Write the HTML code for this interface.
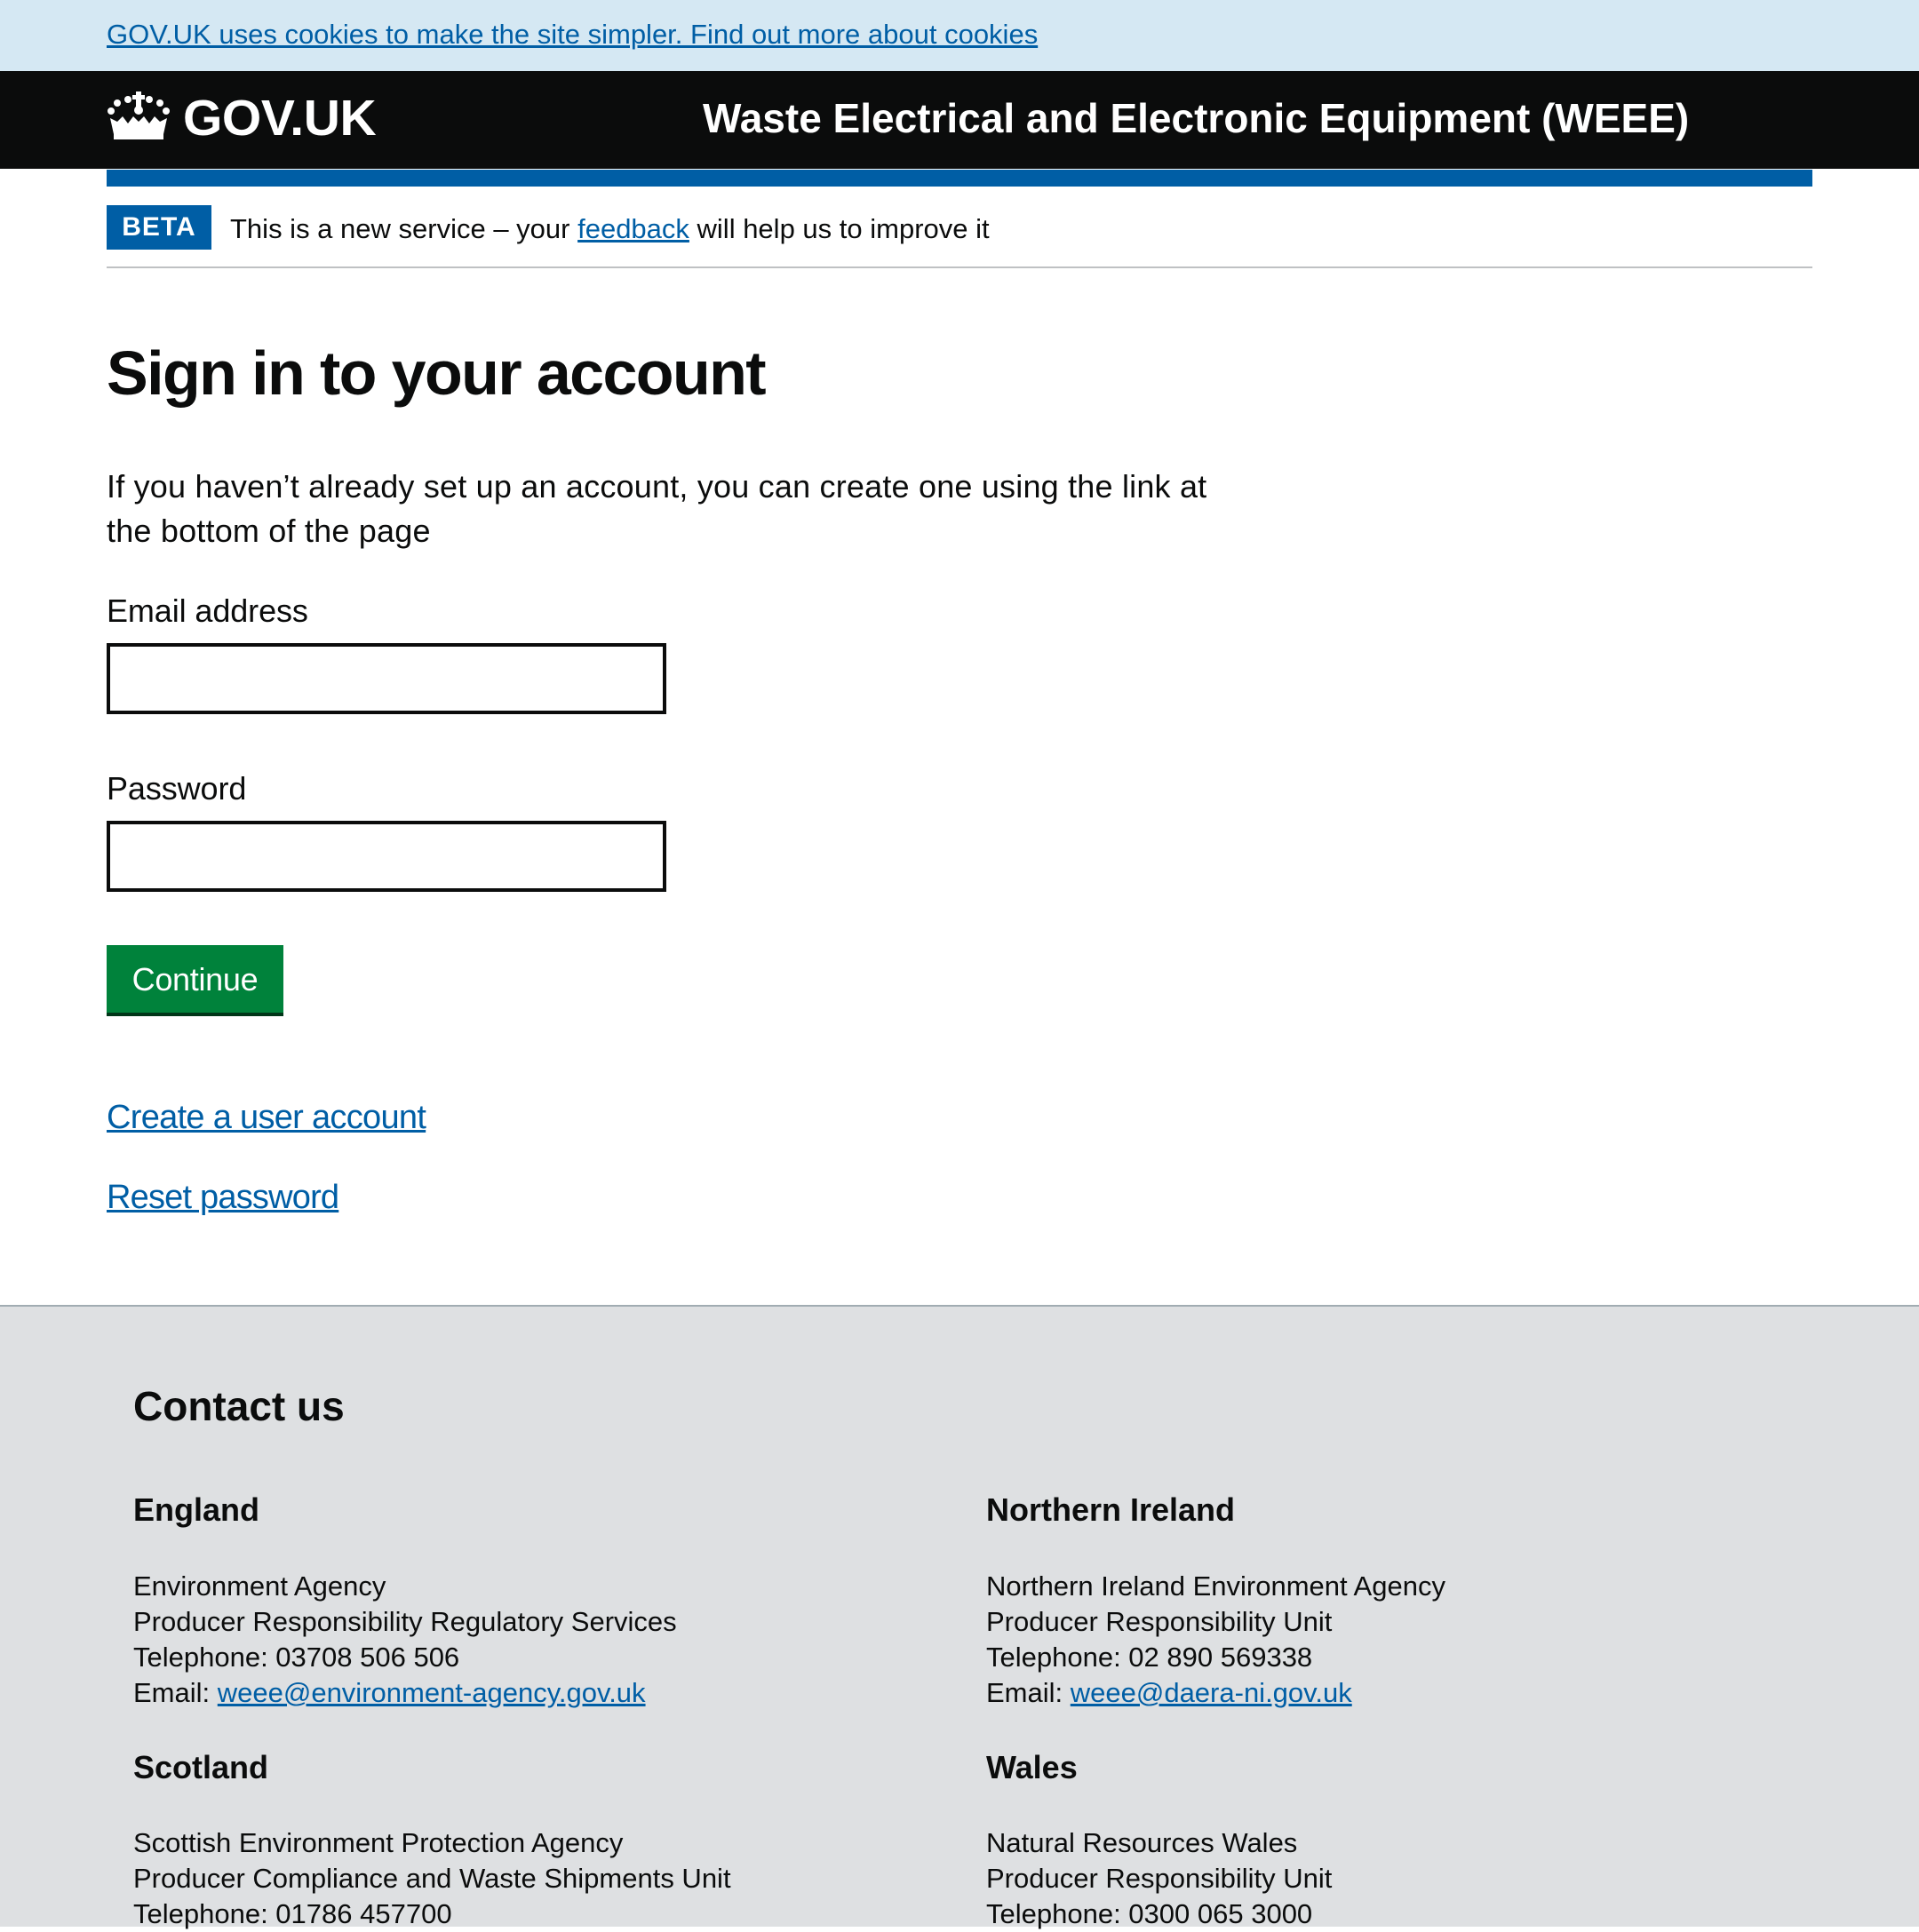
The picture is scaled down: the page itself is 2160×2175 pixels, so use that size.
<!DOCTYPE html>
<html><head><meta charset="utf-8"><style>
*{margin:0;padding:0;box-sizing:border-box}
html,body{width:2160px;height:2160px;overflow:hidden;background:#fff;font-family:"Liberation Sans",Arial,sans-serif;color:#0b0c0c}
.a{position:absolute;white-space:nowrap}
a{color:#005ea5;text-decoration:underline}
</style></head><body>
<div class="a" style="left:0;top:0;width:2160px;height:80px;background:#d5e8f3"></div>
<div class="a" style="left:120px;top:21px;font-size:31px;letter-spacing:0px"><a>GOV.UK uses cookies to make the site simpler. Find out more about cookies</a></div>
<div class="a" style="left:0;top:80px;width:2160px;height:110px;background:#0b0c0c"></div>
<svg class="a" style="left:120px;top:103px" width="72" height="54" viewBox="0 0 72 54" fill="#fff">
<circle cx="5" cy="22" r="4"/><circle cx="12" cy="13" r="4"/><circle cx="24" cy="9" r="4"/><circle cx="48" cy="9" r="4"/><circle cx="60" cy="13" r="4"/><circle cx="67" cy="22" r="4"/>
<rect x="33" y="0" width="6" height="18"/><rect x="29" y="4" width="14" height="5"/><circle cx="36" cy="21" r="5"/>
<path d="M4 30 L12 34 L18 28 L24 36 L30 28 L36 34 L42 28 L48 36 L54 28 L60 34 L68 30 L64 48 L8 48 Z"/><rect x="8" y="48" width="56" height="6"/>
</svg>
<div class="a" style="left:206px;top:100px;font-size:57px;font-weight:bold;color:#fff;letter-spacing:-0.4px">GOV.UK</div>
<div class="a" style="left:791px;top:106px;font-size:46px;font-weight:bold;color:#fff;letter-spacing:0px">Waste Electrical and Electronic Equipment (WEEE)</div>
<div class="a" style="left:120px;top:191px;width:1920px;height:19px;background:#005ea5"></div>
<div class="a" style="left:120px;top:231px;width:118px;height:50px;background:#005ea5;color:#fff;font-weight:bold;font-size:30px;line-height:50px;text-align:center;letter-spacing:1px">BETA</div>
<div class="a" style="left:259px;top:240px;font-size:31px;letter-spacing:0px">This is a new service – your <a>feedback</a> will help us to improve it</div>
<div class="a" style="left:120px;top:300px;width:1920px;height:2px;background:#bfc1c3"></div>
<div class="a" style="left:120px;top:380px;font-size:70px;font-weight:bold;letter-spacing:-1.6px">Sign in to your account</div>
<div class="a" style="left:120px;top:523px;font-size:36px;line-height:50px;letter-spacing:0.2px">If you haven’t already set up an account, you can create one using the link at<br>the bottom of the page</div>
<div class="a" style="left:120px;top:667px;font-size:36px;letter-spacing:-0.1px">Email address</div>
<div class="a" style="left:120px;top:724px;width:630px;height:80px;border:4px solid #0b0c0c"></div>
<div class="a" style="left:120px;top:867px;font-size:36px;letter-spacing:-0.1px">Password</div>
<div class="a" style="left:120px;top:924px;width:630px;height:80px;border:4px solid #0b0c0c"></div>
<div class="a" style="left:120px;top:1064px;width:199px;height:80px;background:#00823b;border-bottom:4px solid #003618;color:#fff;font-size:36px;line-height:78px;text-align:center;letter-spacing:-0.3px">Continue</div>
<div class="a" style="left:120px;top:1237px;font-size:38px;letter-spacing:-0.7px"><a>Create a user account</a></div>
<div class="a" style="left:120px;top:1327px;font-size:38px;letter-spacing:-0.8px"><a>Reset password</a></div>
<div class="a" style="left:0;top:1469px;width:2160px;height:700px;background:#dee0e2;border-top:2px solid #a1acb2"></div>
<div class="a" style="left:150px;top:1556px;font-size:46px;font-weight:bold;letter-spacing:0px">Contact us</div>
<div class="a" style="left:150px;top:1679px;font-size:36px;font-weight:bold;letter-spacing:0px">England</div>
<div class="a" style="left:150px;top:1766px;font-size:31px;line-height:40px;letter-spacing:0px">Environment Agency<br>Producer Responsibility Regulatory Services<br>Telephone: 03708 506 506<br>Email: <a>weee@environment-agency.gov.uk</a></div>
<div class="a" style="left:1110px;top:1679px;font-size:36px;font-weight:bold;letter-spacing:0px">Northern Ireland</div>
<div class="a" style="left:1110px;top:1766px;font-size:31px;line-height:40px;letter-spacing:0px">Northern Ireland Environment Agency<br>Producer Responsibility Unit<br>Telephone: 02 890 569338<br>Email: <a>weee@daera-ni.gov.uk</a></div>
<div class="a" style="left:150px;top:1969px;font-size:36px;font-weight:bold;letter-spacing:0px">Scotland</div>
<div class="a" style="left:150px;top:2055px;font-size:31px;line-height:40px;letter-spacing:0px">Scottish Environment Protection Agency<br>Producer Compliance and Waste Shipments Unit<br>Telephone: 01786 457700</div>
<div class="a" style="left:1110px;top:1969px;font-size:36px;font-weight:bold;letter-spacing:0px">Wales</div>
<div class="a" style="left:1110px;top:2055px;font-size:31px;line-height:40px;letter-spacing:0px">Natural Resources Wales<br>Producer Responsibility Unit<br>Telephone: 0300 065 3000</div>
</body></html>
